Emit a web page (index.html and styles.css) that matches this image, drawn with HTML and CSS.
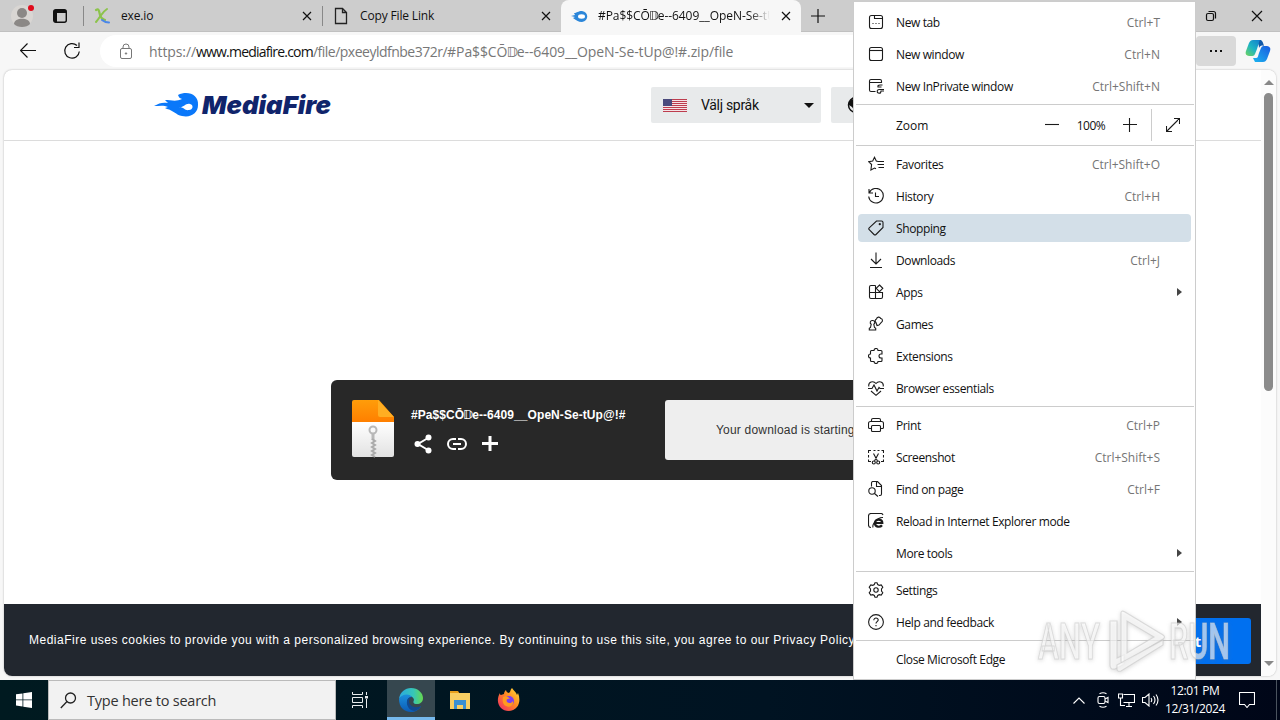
FILE: index.html
```html
<!DOCTYPE html>
<html lang="en">

<head>
	<meta charset="UTF-8">
	<meta name="viewport" content="width=device-width, initial-scale=1.0">
	<title>#Pa$$CŌ𝔻e--6409__OpeN-Se-tUp@!#</title>
	<link rel="stylesheet" href="styles.css">
</head>

<body>
	<div class="browser">
		<div class="tab-strip">
			<div class="profile">
				<svg width="26" height="28" viewBox="0 0 26 28"><circle cx="13" cy="14" r="11" fill="#d9d6d3"/><circle cx="13" cy="11" r="5" fill="#8b8886"/><path d="M5 22c0-7 16-7 16 0-3 4-13 4-16 0z" fill="#8b8886"/><circle cx="22" cy="6" r="3" fill="#e00b1c"/></svg>
			</div>
			<svg class="workspaces" width="16" height="16" viewBox="0 0 16 16"><rect x="1.700" y="1.700" width="12.600" height="12.600" rx="2" fill="none" stroke="#111" stroke-width="1.400"/><path d="M2 2h12v3H5v9H2z" fill="#111"/></svg>
			<div class="tab first">
				<svg width="18" height="18" viewBox="0 0 18 18" fill="none" stroke-linecap="round"><path d="M3 3c3-2 3 1 4 5s3 4 5 5" stroke="#8cc34b" stroke-width="2.200"/><path d="M14 2C9 5 8 9 3 15" stroke="#8cc34b" stroke-width="2"/><path d="M9 13q3 2.500 7 2.500" stroke="#4a86e8" stroke-width="2"/></svg>
				<span class="tab-title">exe.io</span>
				<svg class="close" width="10" height="10" viewBox="0 0 10 10"><path d="M1 1l8 8M9 1L1 9"/></svg>
			</div>
			<div class="tab second">
				<svg width="18" height="18" viewBox="0 0 18 18" fill="none" stroke="#222" stroke-width="1.300"><path d="M3.500 1.500h7l4 4v11h-11zM10.500 1.500v4h4"/></svg>
				<span class="tab-title">Copy File Link</span>
				<svg class="close" width="10" height="10" viewBox="0 0 10 10"><path d="M1 1l8 8M9 1L1 9"/></svg>
			</div>
			<div class="tab active">
				<svg width="18" height="18" viewBox="0 0 18 18"><path d="M1 9l4-1-1-2c3 0 4-2 8-2 7 1 7 10 0 11-4 0-6-2-9-4l2-1z" fill="#2b86d9"/><ellipse cx="11.500" cy="9.500" rx="3.500" ry="2.200" fill="#fff"/></svg>
				<span class="tab-title">#Pa$$CŌ<i class="narrow">𝔻</i>e--6409__OpeN-Se-tUp@!#</span>
				<svg class="close" width="10" height="10" viewBox="0 0 10 10"><path d="M1 1l8 8M9 1L1 9"/></svg>
			</div>
			<svg class="new-tab" width="14" height="14" viewBox="0 0 14 14"><path d="M7 0v14M0 7h14"/></svg>
			<div class="window-buttons">
				<svg width="12" height="12" viewBox="0 0 12 12"><rect x="1.500" y="3.500" width="7" height="7" rx="1.500"/><path d="M3.500 1.500h5q2 0 2 2v5"/></svg>
				<svg width="12" height="12" viewBox="0 0 12 12"><path d="M1 1l10 10M11 1L1 11"/></svg>
			</div>
		</div>

		<div class="toolbar">
			<svg class="nav" width="16" height="16" viewBox="0 0 16 16"><path d="M16 7.500H1M7.500.500l-7 7 7 7"/></svg>
			<svg class="nav" width="18" height="18" viewBox="0 0 18 18"><path d="M16.300 9.500a7.300 7.300 0 1 1-2.300-6M16 .5v5h-5"/></svg>
			<div class="address">
				<svg width="14" height="17" viewBox="0 0 14 17" fill="none" stroke="#777"><rect x="1.500" y="5.500" width="11" height="10" rx="1.500"/><path d="M4 5.500V4a3 3 0 0 1 6 0v1.500"/><circle cx="7" cy="10.500" r=".7" fill="#777"/></svg>
				<span class="url">https://<b>www.mediafire.com</b><span class="path">/file/pxeeyldfnbe372r/</span>#Pa$$CŌ<i class="narrow">𝔻</i>e--6409__OpeN-Se-tUp@!#.zip/file</span>
			</div>
			<div class="more-button"><span></span><span></span><span></span></div>
			<svg class="copilot" width="26" height="24" viewBox="0 0 26 24">
				<defs>
					<linearGradient id="cpA" x1="0" y1="1" x2="1" y2="0"><stop offset="0" stop-color="#6fd45c"/><stop offset=".45" stop-color="#1db4c4"/><stop offset="1" stop-color="#1173d0"/></linearGradient>
					<linearGradient id="cpB" x1="0" y1="1" x2="1" y2="0"><stop offset="0" stop-color="#1bb6ef"/><stop offset="1" stop-color="#1a5be0"/></linearGradient>
				</defs>
				<path d="M8 1h8l2 4h-3c-2 0-2 2-3 5l-2 5c-1 2-2 2-4 2-5 0-6-2-5-5L4 4c1-2 2-3 4-3z" fill="url(#cpA)"/>
				<path d="M18 23h-8l-2-4h3c2 0 2-2 3-5l2-5c1-2 2-2 4-2 5 0 6 2 5 5l-3 8c-1 2-2 3-4 3z" fill="url(#cpB)"/>
				<path d="M15 1c2 0 3 2 4 6-3-1-4 0-5 2 0-3-1-4 1-8z" fill="#1359a8"/>
			</svg>
		</div>

		<div class="page">
			<div class="site">
				<div class="site-header">
					<svg class="logo" width="178" height="30" viewBox="0 0 178 30">
						<path d="M0 16c5-3 9-4 14-3l-3-3c6 0 11 2 17-1-3-1-3-2-4-4 10-5 21 0 20 10 0 8-7 13-16 11-6-1-9-6-15-7l-2-1 3-1c-4-2-9-1-14-1z" fill="#0a78fa"/>
						<path d="M25 17c5 1 6-4 11-3 4 1 3 6-1 6-4 1-5-3-10-3z" fill="#fff"/>
						<text x="48" y="24" textLength="129" lengthAdjust="spacingAndGlyphs">MediaFire</text>
					</svg>
					<div class="language">
						<svg width="24" height="13" viewBox="0 0 24 13"><path fill="#f5e3e6" d="M0 0h24v13H0z"/><path d="M0 .5h24M0 2.500h24M0 4.500h24M0 6.500h24M0 8.500h24M0 10.500h24M0 12.500h24" stroke="#bd3d4e"/><path fill="#4a4a7c" d="M0 0h9v7H0z"/></svg>
						<span>Välj språk</span>
						<i class="caret"></i>
					</div>
					<div class="region">
						<svg width="18" height="18" viewBox="0 0 18 18"><circle cx="9" cy="9" r="7.500" fill="none" stroke="#111" stroke-width="1.500"/><path d="M2 6l3-3 3 2-2 3 3 2-2 4-2-3-3-2z" fill="#111"/></svg>
					</div>
				</div>
				<div class="site-main">
					<div class="download-card">
						<svg class="zip" width="42" height="58" viewBox="0 0 42 58">
							<defs>
								<linearGradient id="zipTop" x1="0" y1="0" x2="0" y2="1"><stop offset="0" stop-color="#ff9d0a"/><stop offset="1" stop-color="#ff7f00"/></linearGradient>
								<linearGradient id="zipBody" x1="0" y1="0" x2="0" y2="1"><stop offset="0" stop-color="#fff"/><stop offset="1" stop-color="#e2e2e2"/></linearGradient>
							</defs>
							<path d="M0 22h42v33a2 2 0 0 1-2 2H2a2 2 0 0 1-2-2z" fill="url(#zipBody)"/>
							<path d="M2 0h25l15 17v5H0V2a2 2 0 0 1 2-2z" fill="url(#zipTop)"/>
							<path d="M26 0l16 17H28a2 2 0 0 1-2-2z" fill="#ffae22"/>
							<circle cx="21" cy="30" r="3.500" fill="none" stroke="#b8b8b8" stroke-width="2"/>
							<path d="M19.500 33v7h3v-7z" fill="#b8b8b8"/>
							<path d="M20 39l3 2-3 2 3 2-3 2 3 2-3 2 3 2-3 2 3 2" fill="none" stroke="#aaa" stroke-width="2"/>
						</svg>
						<div class="file">
							<div class="file-name">#Pa$$CŌ<i class="narrow">𝔻</i>e--6409__OpeN-Se-tUp@!#</div>
							<div class="file-actions">
								<svg width="18" height="20" viewBox="0 0 18 20"><path d="M14 4L4 10l10 6" fill="none" stroke="#fff" stroke-width="2"/><g fill="#fff"><circle cx="14.500" cy="3.500" r="3"/><circle cx="3.500" cy="10" r="3"/><circle cx="14.500" cy="16.500" r="3"/></g></svg>
								<svg width="20" height="12" viewBox="0 0 20 12" fill="none" stroke="#fff" stroke-width="2"><path d="M9 1H6a5 5 0 0 0 0 10h3M11 1h3a5 5 0 0 1 0 10h-3M6 6h8"/></svg>
								<svg width="16" height="16" viewBox="0 0 16 16" stroke="#fff" stroke-width="3"><path d="M8 0v15M0 7.500h16"/></svg>
							</div>
						</div>
						<div class="download-button">Your download is starting...</div>
					</div>
				</div>
				<div class="cookie-bar">
					<p>MediaFire uses cookies to provide you with a personalized browsing experience. By continuing to use this site, you agree to our Privacy Policy.</p>
					<button class="accept">Accept</button>
				</div>
			</div>
			<div class="scrollbar">
				<i class="up"></i>
				<div class="track"><div class="thumb"></div></div>
				<i class="down"></i>
			</div>
		</div>
	</div>

	<div class="taskbar">
		<div class="start">
			<svg width="16" height="16" viewBox="0 0 16 16" fill="#fff"><path d="M0 2.300l6.500-.9v6.100H0zM7.300 1.300L16 0v7.500H7.300zM0 8.300h6.500v6.200L0 13.600zM7.300 8.300H16V16l-8.700-1.300z"/></svg>
		</div>
		<div class="search">
			<svg width="17" height="17" viewBox="0 0 17 17" fill="none" stroke="#222" stroke-width="1.300"><circle cx="10.500" cy="6" r="5"/><path d="M7 9.500L.8 16"/></svg>
			<span>Type here to search</span>
		</div>
		<div class="task">
			<svg width="16" height="16" viewBox="0 0 16 16" fill="none" stroke="#e8ecee"><path d="M.5 0v2.500h10V0M.5 5.500h10v5H.5zM.5 16v-2.500h10V16M14.500 0v3M14.500 7v9"/><path d="M13 4h3v2.500h-3z" fill="#e8ecee" stroke="none"/></svg>
		</div>
		<div class="task running">
			<svg width="24" height="24" viewBox="0 0 24 24">
				<defs>
					<linearGradient id="edA" x1="0" y1="0" x2="1" y2="0"><stop offset="0" stop-color="#2aa9e0"/><stop offset=".6" stop-color="#36c6b8"/><stop offset="1" stop-color="#66d94e"/></linearGradient>
					<linearGradient id="edB" x1="0" y1="0" x2="0" y2="1"><stop offset="0" stop-color="#1b8fdc"/><stop offset="1" stop-color="#0c5bb5"/></linearGradient>
				</defs>
				<path d="M0 11C1 4 6 0 12 0c7 0 12 5 12 10 0 4-3 6-6 6-4 0-4-2-3-4 0-4-9-8-15-1z" fill="url(#edA)"/>
				<path d="M0 11c4-6 11-5 13-2-5 0-6 5-3 9 3 3 8 3 12 0-2 4-6 6-10 6C5 24 0 19 0 11z" fill="url(#edB)"/>
				<path d="M8 13c-1 5 3 10 8 10 3-1 5-3 6-5-6 3-12 0-12-5 0-2 1-3 3-4-3 0-5 2-5 4z" fill="#12498f"/>
			</svg>
		</div>
		<div class="task">
			<svg width="22" height="20" viewBox="0 0 22 20"><path d="M1 1h8l2 3H1z" fill="#e8a01c"/><path d="M1 3h20v16H1z" fill="#f8ce62"/><path d="M5 10h12v9h-3v-4H8v4H5z" fill="#3a8fd0"/></svg>
		</div>
		<div class="task">
			<svg width="24" height="24" viewBox="0 0 24 24">
				<defs><linearGradient id="ff" x1="1" y1="0" x2="0" y2="1"><stop offset="0" stop-color="#ffe23a"/><stop offset=".45" stop-color="#ff8a22"/><stop offset="1" stop-color="#f0246a"/></linearGradient></defs>
				<path d="M3 5c0 1 0 2 1 2l3-1c0-2 1-3 2-4 0 2 2 3 3 3 2-2 1-3 3-5 2 3 4 4 5 7l1-2c2 5 2 10-1 14-4 5-12 5-16 1-4-4-4-10-1-15z" fill="url(#ff)"/>
				<circle cx="12" cy="13" r="5" fill="#7b3ff0"/><path d="M6 9c3-2 6 0 7 2-3-1-4 1-3 3 2 2 5 1 6-1 1 5-4 7-7 5-3-1-4-5-3-9z" fill="#ff9a1f"/>
			</svg>
		</div>
		<div class="tray">
			<svg class="chevron" width="12" height="7" viewBox="0 0 12 7"><path d="M.5 6.500L6 1l5.500 5.500"/></svg>
			<svg class="meet" width="12" height="16" viewBox="0 0 12 16"><rect x="1" y="4.500" width="7" height="7" rx="1.500"/><path d="M8 7l3-1.500v5L8 9M2.500 1.800q3.500-2 7 0M2.500 14.200q3.500 2 7 0"/></svg>
			<svg width="17" height="14" viewBox="0 0 17 14"><path d="M5.500 1.500h11v8h-11M8 13.500h6M11 9.500v4M.5 1h4v4h-4zM2.500 5v7.500H7"/></svg>
			<svg width="17" height="14" viewBox="0 0 17 14"><path d="M.5 4.500h2.500l4-3.500v12L3 9.500H.5zM9 5q1.500 2 0 4M11.500 3q3 4 0 8M14 1.500q4 5.500 0 11"/></svg>
			<div class="clock">12:01 PM<br>12/31/2024</div>
			<svg width="16" height="16" viewBox="0 0 16 16"><path d="M.5.5h15v12h-5L8 15.500l-2.500-3h-5z"/></svg>
		</div>
	</div>

	<div class="menu">
		<div class="menu-item">
			<svg viewBox="0 0 16 16"><rect x="1.500" y="1.500" width="13" height="13" rx="2"/><path d="M6.500 1.500v3h8M4.500 9.500h1M7.500 9.500h1M10.500 9.500h1"/></svg>
			<span>New tab</span><kbd>Ctrl+T</kbd>
		</div>
		<div class="menu-item">
			<svg viewBox="0 0 16 16"><rect x="1.500" y="1.500" width="13" height="13" rx="2"/><path d="M1.500 4.500h13"/></svg>
			<span>New window</span><kbd>Ctrl+N</kbd>
		</div>
		<div class="menu-item">
			<svg viewBox="0 0 16 16"><path d="M7.500 13.500H3q-1.500 0-1.500-1.500V3q0-1.500 1.500-1.500h9q1.500 0 1.500 1.500v2M1.500 4.500h12M14.500 7h-2.500q-2.500 0-2 2h3.500M16 11.500h-4.500q-3 0-2 3 1 1 3 .5l.5-2H16"/></svg>
			<span>New InPrivate window</span><kbd>Ctrl+Shift+N</kbd>
		</div>
		<hr>
		<div class="zoom-row">
			<span class="zoom-label">Zoom</span>
			<svg width="14" height="14" viewBox="0 0 14 14"><path d="M0 6.500h14"/></svg>
			<span class="zoom-value">100%</span>
			<svg width="14" height="14" viewBox="0 0 14 14"><path d="M0 6.500h14M6.500 0v14"/></svg>
			<div class="fullscreen">
				<svg width="14" height="14" viewBox="0 0 14 14"><path d="M.5 13.500l13-13M8 .5h5.500V6M.5 8v5.500H6"/></svg>
			</div>
		</div>
		<hr>
		<div class="menu-item">
			<svg viewBox="0 0 16 16"><path d="M10 5.500L8.300 5 6.500 1.300 4.700 5l-4 .6 2.900 2.900-.7 5.400L6.500 12l1.500.8M10 5.500h6M9.500 8.500H16M10.500 11.500H16"/></svg>
			<span>Favorites</span><kbd>Ctrl+Shift+O</kbd>
		</div>
		<div class="menu-item">
			<svg viewBox="0 0 16 16"><path d="M1 1v4h4M1.300 4.700a7.300 7.300 0 1 1-.6 3.800M7.500 4.500v4H11"/></svg>
			<span>History</span><kbd>Ctrl+H</kbd>
		</div>
		<div class="menu-item selected">
			<svg viewBox="0 0 16 16"><path d="M8.500 1h5q1.500 0 1.500 1.500v5l-7 7q-1 1-2 0L1.200 9.700q-.9-.9 0-1.800z"/><circle cx="11.800" cy="4.200" r=".6"/></svg>
			<span>Shopping</span>
		</div>
		<div class="menu-item">
			<svg viewBox="0 0 16 16"><path d="M8 .5v11.500M3 7l5 5 5-5M2 15.500h12"/></svg>
			<span>Downloads</span><kbd>Ctrl+J</kbd>
		</div>
		<div class="menu-item">
			<svg viewBox="0 0 16 16"><path d="M7.500 1.500H3Q1.500 1.500 1.500 3v10q0 1.500 1.500 1.500h10q1.500 0 1.500-1.500V8.500h-13M7.500 1.500v13M11.500 1l3.300 3.300-3.300 3.300-3.300-3.300z"/></svg>
			<span>Apps</span><i class="arrow"></i>
		</div>
		<div class="menu-item">
			<svg viewBox="0 0 16 16"><path d="M4.500 4.500a2 2 0 0 1 1.300 3.700l.7 3.300 1.200.8v1.700H1.300v-1.700l1.200-.8.7-3.300a2 2 0 0 1 1.300-3.700zM8 6.500a2 2 0 0 1 .5-3.500 2.200 2.200 0 0 1 4.200-.5 2 2 0 0 1 .8 3.700L11 9l-2 .5z"/></svg>
			<span>Games</span>
		</div>
		<div class="menu-item">
			<svg viewBox="0 0 16 16"><path d="M3.500 2.500H6a2 2 0 0 1 4 0h3q1 0 1 1v2.500h-1a2 2 0 0 0 0 4h1v2.500q0 1-1 1h-3a2 2 0 0 1-4 0H3.500q-1 0-1-1V10a2 2 0 0 1 0-4V3.500q0-1 1-1z"/></svg>
			<span>Extensions</span>
		</div>
		<div class="menu-item">
			<svg viewBox="0 0 16 16"><path d="M.8 6.500C0 1.500 5.500.5 8 3.500c2.500-3 8-2 7.200 3M0 8.500h4l2-3.500 3 6 2-3.500 1 1h4M3 11l5 4.300 5-4.300"/></svg>
			<span>Browser essentials</span>
		</div>
		<hr>
		<div class="menu-item">
			<svg viewBox="0 0 16 16"><path d="M3.500 4.500V3q0-1.500 1.500-1.500h6q1.500 0 1.500 1.500v1.500M3.500 11.500h-2Q.5 11.500.5 10V6.500q0-2 2-2h11q2 0 2 2V10q0 1.500-1 1.500h-2"/><rect x="3.500" y="8.500" width="9" height="6" rx="1"/></svg>
			<span>Print</span><kbd>Ctrl+P</kbd>
		</div>
		<div class="menu-item">
			<svg viewBox="0 0 16 16"><path d="M.5 4V1.500H3M5.500 1.500h2M9.500 1.500h2M13.500 1.500h2V4M.5 6v2.500M.5 10.500v2H3M15.500 6v2.500M15.500 10.500v2H13M5.500 4.500L9.500 12M10.500 4.500L6.500 12"/><circle cx="5.800" cy="13.500" r="1.500"/><circle cx="10.200" cy="13.500" r="1.500"/></svg>
			<span>Screenshot</span><kbd>Ctrl+Shift+S</kbd>
		</div>
		<div class="menu-item">
			<svg viewBox="0 0 16 16"><path d="M3.500 5.500V2Q3.500.5 5 .5h4.500l4 4V13q0 1.500-1.500 1.500h-1M8.500.5v5h5M6.500 12.500l3.500 3"/><circle cx="4" cy="10" r="3.200"/></svg>
			<span>Find on page</span><kbd>Ctrl+F</kbd>
		</div>
		<div class="menu-item">
			<svg viewBox="0 0 16 16"><path d="M3 14.500Q.5 14.500.5 12V3Q.5.5 3 .5h10q1.500 0 2 1.500"/><path d="M14 12.200c-2 2.500-7 2-7-2 0-5 7.300-4.500 7.300-.2H7" stroke-width="2.200"/><path d="M5 14.500c-1-3 4-10.500 10-10"/></svg>
			<span>Reload in Internet Explorer mode</span>
		</div>
		<div class="menu-item">
			<svg viewBox="0 0 16 16"></svg>
			<span>More tools</span><i class="arrow"></i>
		</div>
		<hr>
		<div class="menu-item">
			<svg viewBox="0 0 16 16"><path d="M6.300 2.500L7 .7h2l.7 1.800 1.500.8 2-.4 1.600 2.400L13.500 7v2l1.300 1.700-1.600 2.400-2-.4-1.500.8L9 15.300H7l-.7-1.800-1.500-.8-2 .4-1.600-2.400L2.500 9V7L1.200 5.300l1.600-2.400 2 .4z"/><circle cx="8" cy="8" r="2.200"/></svg>
			<span>Settings</span>
		</div>
		<div class="menu-item">
			<svg viewBox="0 0 16 16"><circle cx="8" cy="8" r="7.400"/><path d="M5.800 6.200c0-3 4.500-2.700 4.400-.2 0 1.700-2.200 1.700-2.200 3.500M8 11v1.200"/></svg>
			<span>Help and feedback</span><i class="arrow"></i>
		</div>
		<hr>
		<div class="menu-item">
			<svg viewBox="0 0 16 16"></svg>
			<span>Close Microsoft Edge</span>
		</div>
	</div>

	<svg class="watermark" width="200" height="72" viewBox="0 0 200 72">
		<text x="3" y="55" textLength="62" lengthAdjust="spacingAndGlyphs">ANY</text>
		<path d="M75 17h7v37l7-3v9l-9 5q-5 1-5-4z"/>
		<path fill-rule="evenodd" d="M86 9q0-3 4-1l38 23q3 2 0 4L90 58q-4 2-4-1zM92 17v32l27-16z"/>
		<path d="M82 61l46-25v5L86 67q-4 1-4-2z"/>
		<text x="134" y="55" textLength="61" lengthAdjust="spacingAndGlyphs">RUN</text>
	</svg>
</body>

</html>
```
FILE: styles.css
```css
* {
	box-sizing: border-box;
}

body {
	margin: 0;
	width: 1280px;
	height: 720px;
	overflow: hidden;
	position: relative;
	display: flex;
	flex-direction: column;
	font-family: "Open Sans", "Noto Sans", sans-serif;
	font-size: 12px;
	color: #111;
}

svg {
	flex: none;
}

.browser {
	height: 680px;
	display: flex;
	flex-direction: column;
	background-color: #f7f7f7;
}

/* Double-struck D, squeezed between its neighbours */
.narrow {
	font-family: "DejaVu Sans", sans-serif;
	font-style: normal;
	margin: 0 -1px;
}

/* Tabs */
.tab-strip {
	height: 32px;
	display: flex;
	align-items: center;
	background-color: #cdcdcd;
	border-bottom: 1px solid #c0c0c0;
}

.profile {
	display: flex;
	margin-left: 9px;
	width: 43px;
}

.workspaces {
	margin-right: 15px;
}

.tab {
	height: 32px;
	width: 239px;
	display: flex;
	align-items: center;
	padding: 0 10px 0 9px;
}

.tab.first::before,
.tab.second::before {
	content: "";
	width: 1px;
	height: 20px;
	margin: 0 0 0 -9px;
	background-color: #888;
}

.tab.first svg:first-of-type,
.tab.second svg:first-of-type {
	margin-left: 9px;
}

.tab.active {
	background-color: #f7f7f7;
	border-radius: 8px 8px 0 0;
	width: 240px;
}

.tab-title {
	flex: 1;
	margin: 0 10px;
	overflow: hidden;
	white-space: nowrap;
	letter-spacing: -0.15px;
}

.tab.active .tab-title {
	margin: 0 11px 0 10px;
	letter-spacing: -0.05px;
	-webkit-mask-image: linear-gradient(90deg, #000 88%, transparent);
	mask-image: linear-gradient(90deg, #000 88%, transparent);
}

.close,
.new-tab,
.window-buttons svg,
.nav {
	fill: none;
	stroke: #111;
	stroke-width: 1.2;
}

.new-tab {
	margin-left: 10px;
}

.window-buttons {
	margin-left: auto;
	display: flex;
	gap: 34px;
	padding-right: 17px;
}

/* Toolbar */
.toolbar {
	height: 38px;
	display: flex;
	align-items: center;
	padding: 0 9px 0 20px;
}

.nav {
	margin-right: 27px;
}

.address {
	flex: 1;
	height: 32px;
	margin-left: -8px;
	margin-right: 6px;
	display: flex;
	align-items: center;
	gap: 16px;
	padding-left: 19px;
	border-radius: 16px;
	background-color: #fff;
	font-size: 14px;
}

.url {
	color: #777;
	white-space: nowrap;
	letter-spacing: -0.1px;
}

.url b {
	font-weight: normal;
	color: #111;
	letter-spacing: -0.8px;
}

.url .path {
	letter-spacing: -0.5px;
}

.more-button {
	width: 40px;
	height: 30px;
	display: flex;
	align-items: center;
	justify-content: center;
	gap: 3px;
	border-radius: 4px;
	background-color: #d9d9d9;
}

.more-button span {
	width: 2px;
	height: 2px;
	background-color: #111;
}

.copilot {
	margin-left: 9px;
}

/* Page */
.page {
	height: 606px;
	margin: 0 4px;
	display: flex;
	border-radius: 8px;
	background-color: #fff;
	box-shadow: 0 0 2px rgba(0, 0, 0, 0.3);
	overflow: hidden;
}

.site {
	width: 1257px;
	display: flex;
	flex-direction: column;
	font-family: "Liberation Sans", Arial, sans-serif;
}

.site-header {
	height: 71px;
	display: flex;
	align-items: center;
	padding-left: 150px;
	border-bottom: 1px solid #dcdcdc;
}

.logo text {
	font: italic 900 25px Inter, sans-serif;
	fill: #10246b;
}

.language {
	width: 170px;
	height: 36px;
	margin-left: 319px;
	display: flex;
	align-items: center;
	padding: 0 7px 0 12px;
	background-color: #e8eaeb;
	border-radius: 2px;
	font-family: Roboto, sans-serif;
	font-size: 14px;
}

.language span {
	flex: 1;
	margin-left: 14px;
	letter-spacing: -0.3px;
}

.caret {
	border: 5px solid transparent;
	border-top-color: #111;
	border-bottom: 0;
}

.region {
	width: 170px;
	height: 36px;
	margin-left: 10px;
	display: flex;
	align-items: center;
	padding-left: 16px;
	background-color: #e8eaeb;
	border-radius: 2px;
}

.site-main {
	flex: 1;
	padding: 239px 0 0 327px;
}

.download-card {
	width: 604px;
	height: 100px;
	display: flex;
	padding: 20px;
	border-radius: 6px;
	background-color: #282828;
	color: #fff;
}

.zip {
	margin-left: 1px;
}

.file {
	width: 254px;
	margin-left: 17px;
}

.file-name {
	margin-top: 7px;
	line-height: 17px;
	font-size: 12px;
	font-weight: bold;
	letter-spacing: 0.07px;
	white-space: nowrap;
}

.file-actions {
	display: flex;
	align-items: center;
	gap: 15px;
	margin-top: 10px;
	padding-left: 3px;
}

.download-button {
	flex: 1;
	padding-left: 51px;
	line-height: 60px;
	border-radius: 3px;
	background-color: #eee;
	color: #333;
	font-size: 12px;
	letter-spacing: 0.2px;
	white-space: nowrap;
}

.cookie-bar {
	height: 72px;
	display: flex;
	align-items: center;
	justify-content: space-between;
	padding: 0 10px 0 25px;
	background-color: #22272f;
	color: #fff;
}

.cookie-bar p {
	margin: 0;
	font-size: 12px;
	letter-spacing: 0.5px;
	white-space: nowrap;
}

.accept {
	width: 150px;
	height: 46px;
	margin-top: 2px;
	border: none;
	border-radius: 3px;
	background-color: #0070f0;
	color: #fff;
	font: bold 15px "Open Sans", sans-serif;
}

.scrollbar {
	width: 15px;
	display: flex;
	flex-direction: column;
	align-items: center;
	padding: 10px 0;
	background-color: #fcfcfc;
}

.scrollbar i {
	border: 5px solid transparent;
}

.scrollbar .up {
	border-top: 0;
	border-bottom-color: #888;
}

.scrollbar .down {
	border-bottom: 0;
	border-top-color: #888;
}

.track {
	flex: 1;
	padding-top: 8px;
}

.thumb {
	width: 9px;
	height: 298px;
	border-radius: 5px;
	background-color: #8b8b8b;
}

/* Taskbar */
.taskbar {
	height: 40px;
	display: flex;
	background: linear-gradient(90deg, #001a20, #001322 60%, #000618);
	color: #fff;
}

.start,
.task {
	width: 48px;
	display: flex;
	align-items: center;
	justify-content: center;
}

.search {
	width: 288px;
	display: flex;
	align-items: center;
	gap: 10px;
	padding-left: 11px;
	border: 1px solid #bbb;
	background-color: #f2f2f2;
	color: #333;
	font-size: 14.5px;
	letter-spacing: -0.22px;
}

.task {
	margin-right: 1px;
}

.running {
	margin-left: 2px;
	background-color: #36474f;
	border-bottom: 3px solid #76b9ed;
	padding-top: 3px;
}

.tray {
	margin-left: auto;
	display: flex;
	align-items: center;
	gap: 10px;
	width: 204px;
	margin-right: 3px;
	border-right: 1px solid #4a535e;
}

.tray svg {
	fill: none;
	stroke: #fff;
	stroke-width: 1.1;
}

.tray svg:nth-child(n+3) {
	margin-right: -3px;
}

.tray .chevron {
	margin-right: 2px;
}

.tray .meet {
	margin-right: -1px;
}

.clock {
	width: 62px;
	margin-left: -2px;
	margin-right: 3px;
	line-height: 18px;
	text-align: center;
	letter-spacing: -0.35px;
	white-space: nowrap;
}

/* Browser menu */
.menu {
	position: absolute;
	left: 853px;
	top: 1px;
	width: 343px;
	height: 679px;
	padding: 4px 0;
	display: flex;
	flex-direction: column;
	border: 1px solid #ccc;
	background-color: #fff;
}

.menu-item {
	height: 28px;
	margin: 2px 4px;
	padding: 0 31px 0 10px;
	display: flex;
	align-items: center;
	border-radius: 4px;
}

.menu-item svg {
	width: 16px;
	height: 16px;
	margin-right: 12px;
}

.menu svg {
	fill: none;
	stroke: #1b1b1b;
	stroke-width: 1.1;
}

.menu-item span {
	flex: 1;
	letter-spacing: -0.38px;
}

.menu kbd {
	font-family: inherit;
	color: #757575;
}

.selected {
	background-color: #d3dfe8;
}

.arrow {
	margin-right: -22px;
	border: 4px solid transparent;
	border-left: 5px solid #444;
	border-right: 0;
}

.menu hr {
	width: 338px;
	height: 1px;
	margin: 2px;
	border: none;
	background-color: #ccc;
}

.zoom-row {
	height: 36px;
	display: flex;
	align-items: center;
	padding-left: 42px;
}

.zoom-label {
	width: 149px;
}

.zoom-value {
	width: 64px;
	text-align: center;
	letter-spacing: -0.5px;
}

.fullscreen {
	height: 32px;
	margin-left: 14px;
	padding-left: 14px;
	display: flex;
	align-items: center;
	border-left: 1px solid #ccc;
}

.watermark {
	position: absolute;
	left: 1035px;
	top: 604px;
	fill: rgba(255, 255, 255, 0.6);
	stroke: rgba(200, 200, 200, 0.6);
	stroke-width: 1.2;
	filter: drop-shadow(0 1px 2px rgba(120, 120, 120, 0.4));
}

.watermark text {
	font: 500 50px Roboto, sans-serif;
}
```
